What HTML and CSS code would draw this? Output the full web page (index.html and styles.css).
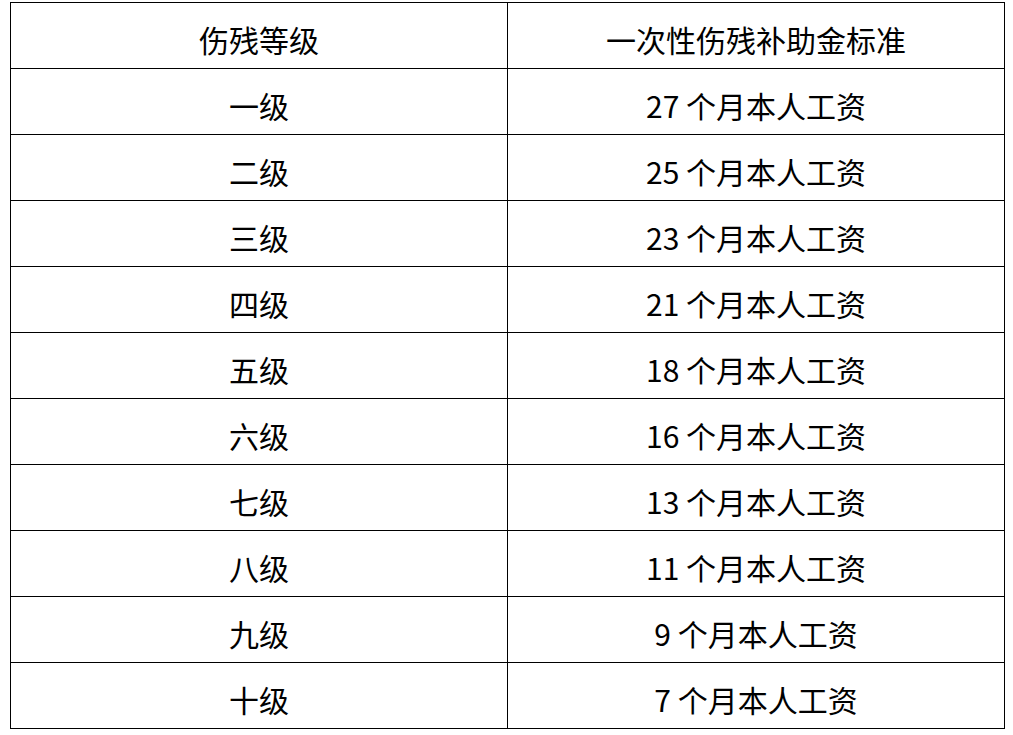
FILE: index.html
```html
<!DOCTYPE html>
<html lang="zh">
<head>
<meta charset="utf-8">
<title>伤残等级</title>
<link rel="stylesheet" href="styles.css">
</head>
<body>
<div class="table">
  <div class="cell">伤残等级</div><div class="cell">一次性伤残补助金标准</div>
  <div class="cell">一级</div><div class="cell">27 个月本人工资</div>
  <div class="cell">二级</div><div class="cell">25 个月本人工资</div>
  <div class="cell">三级</div><div class="cell">23 个月本人工资</div>
  <div class="cell">四级</div><div class="cell">21 个月本人工资</div>
  <div class="cell">五级</div><div class="cell">18 个月本人工资</div>
  <div class="cell">六级</div><div class="cell">16 个月本人工资</div>
  <div class="cell">七级</div><div class="cell">13 个月本人工资</div>
  <div class="cell">八级</div><div class="cell">11 个月本人工资</div>
  <div class="cell">九级</div><div class="cell">9 个月本人工资</div>
  <div class="cell">十级</div><div class="cell">7 个月本人工资</div>
</div>
</body>
</html>
```
FILE: styles.css
```css
html, body {
  margin: 0;
  padding: 0;
  background: #fff;
}
body {
  padding: 2px 0 0 10px;
  font-family: "Noto Sans CJK SC", "Noto Sans", sans-serif;
  color: #000;
}
.table {
  display: grid;
  grid-template-columns: 497px 497px;
  grid-auto-rows: 66px;
  width: 994px;
  border-top: 1px solid #000;
  border-left: 1px solid #000;
}
.cell {
  box-sizing: border-box;
  border-right: 1px solid #000;
  border-bottom: 1px solid #000;
  display: flex;
  align-items: center;
  justify-content: center;
  font-size: 30px;
  font-weight: 400;
  line-height: 1;
  padding-top: 6px;
}
```
